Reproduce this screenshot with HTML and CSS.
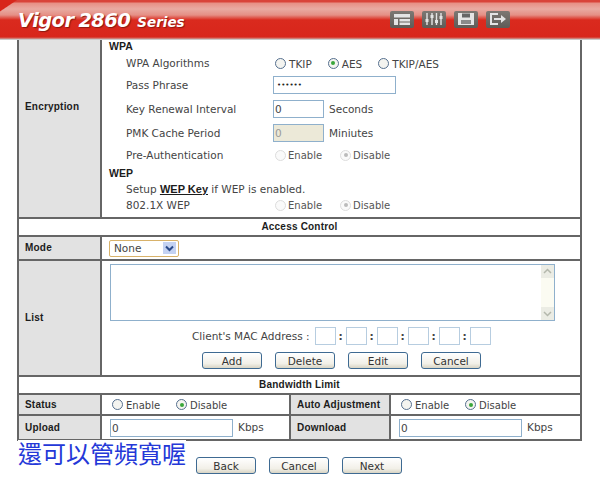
FILE: index.html
```html
<!DOCTYPE html>
<html lang="en">
<head>
<meta charset="utf-8">
<title>Vigor2860 Series</title>
<link rel="stylesheet" href="styles.css">
</head>
<body>
<header class="banner">
  <div class="logo"><span class="logo-name">Vigor</span><span class="logo-num">2860</span><span class="logo-series">Series</span></div>
  <nav class="tools">
    <span class="tool"><svg width="22" height="16" viewBox="0 0 22 16"><path d="M3 3h16v3.500H3zM3 8h4v6H3zM8.500 8H19v2.500H8.500zM8.500 11.500H19V14H8.500z" fill="#e4e4e4"/></svg></span>
    <span class="tool"><svg width="22" height="16" viewBox="0 0 22 16"><path d="M4 2v12M9 2v12M13.500 2v12M18 2v12" stroke="#e4e4e4" stroke-width="1.400"/><path d="M2.500 8h3v3h-3zM7.500 4h3v3h-3zM12 9h3v3h-3zM16.500 5h3v3h-3z" fill="#e4e4e4"/></svg></span>
    <span class="tool"><svg width="22" height="16" viewBox="0 0 22 16"><path d="M3 2h16v12H3z" fill="#e4e4e4"/><path d="M7 2.500h8v4H7z" fill="#666"/><path d="M6 9h10v4H6z" fill="#8a8a8a"/></svg></span>
    <span class="tool"><svg width="22" height="16" viewBox="0 0 22 16"><path d="M11 3H4v10h7" fill="none" stroke="#e4e4e4" stroke-width="2"/><path d="M7 7h7V4l5 4-5 4V9H7z" fill="#e4e4e4"/></svg></span>
  </nav>
</header>

<table class="cfg">
  <colgroup><col class="c1"><col class="c2"><col class="c3"><col class="c4"></colgroup>
  <tr class="r-enc">
    <th class="th-enc">Encryption</th>
    <td colspan="3" class="enc">
      <div class="sub">WPA</div>
      <div class="line h22"><span class="k">WPA Algorithms</span><label class="radio r1"><i class="rb"></i>TKIP</label><label class="radio g1"><i class="rb on"></i>AES</label><label class="radio g1"><i class="rb"></i>TKIP/AES</label></div>
      <div class="line h22"><span class="k">Pass Phrase</span><span class="inp w123 dots">••••••</span></div>
      <div class="line h26"><span class="k">Key Renewal Interval</span><span class="inp w51">0</span><span class="unit">Seconds</span></div>
      <div class="line h22"><span class="k">PMK Cache Period</span><span class="inp w51 off">0</span><span class="unit">Miniutes</span></div>
      <div class="line h22"><span class="k">Pre-Authentication</span><label class="radio dis r1"><i class="rb off"></i>Enable</label><label class="radio dis g2"><i class="rb off on"></i>Disable</label></div>
      <div class="sub s2">WEP</div>
      <div class="line h15"><span>Setup <a class="link" href="#">WEP Key</a> if WEP is enabled.</span></div>
      <div class="line h18"><span class="k">802.1X WEP</span><label class="radio dis r1"><i class="rb off"></i>Enable</label><label class="radio dis g2"><i class="rb off on"></i>Disable</label></div>
    </td>
  </tr>
  <tr class="r-head"><td colspan="4" class="head">Access Control</td></tr>
  <tr class="r-mode">
    <th>Mode</th>
    <td colspan="3"><span class="select">None<i class="arrow"><svg width="9" height="7" viewBox="0 0 9 7"><path d="M1 1.500l3.500 3.500L8 1.500" fill="none" stroke="#2a4a8a" stroke-width="2"/></svg></i></span></td>
  </tr>
  <tr class="r-list">
    <th>List</th>
    <td colspan="3" class="list">
      <div class="area"><div class="scroll"><i class="sb"><svg width="13" height="13" viewBox="0 0 13 13"><path d="M3 8l3.500-3.500L10 8" fill="none" stroke="#b4b8ac" stroke-width="1.500"/></svg></i><i class="sb"><svg width="13" height="13" viewBox="0 0 13 13"><path d="M3 5l3.500 3.500L10 5" fill="none" stroke="#b4b8ac" stroke-width="1.500"/></svg></i></div></div>
      <div class="mac">Client's MAC Address :<span class="oct"></span><b>:</b><span class="oct"></span><b>:</b><span class="oct"></span><b>:</b><span class="oct"></span><b>:</b><span class="oct"></span><b>:</b><span class="oct"></span></div>
      <div class="btns"><button class="btn">Add</button><button class="btn">Delete</button><button class="btn">Edit</button><button class="btn">Cancel</button></div>
    </td>
  </tr>
  <tr class="r-head"><td colspan="4" class="head">Bandwidth Limit</td></tr>
  <tr class="r-status">
    <th>Status</th>
    <td><div class="pair"><label class="radio"><i class="rb"></i>Enable</label><label class="radio g3"><i class="rb on"></i>Disable</label></div></td>
    <th class="nw">Auto Adjustment</th>
    <td><div class="pair"><label class="radio"><i class="rb"></i>Enable</label><label class="radio g3"><i class="rb on"></i>Disable</label></div></td>
  </tr>
  <tr class="r-rate">
    <th>Upload</th>
    <td><span class="inp w123">0</span><span class="unit">Kbps</span></td>
    <th>Download</th>
    <td><span class="inp w123">0</span><span class="unit">Kbps</span></td>
  </tr>
</table>

<div class="footer"><button class="btn">Back</button><button class="btn">Cancel</button><button class="btn">Next</button></div>
<div class="note">還可以管頻寬喔</div>
</body>
</html>
```
FILE: styles.css
```css
html, body { margin: 0; padding: 0; }
body { position: relative; width: 600px; height: 480px; overflow: hidden; background: #fff; color: #444; font: 10.500px/14px "DejaVu Sans", Verdana, sans-serif; }
.banner { height: 40px; box-sizing: border-box; display: flex; align-items: center; justify-content: space-between; padding: 0 90px 0 18px; border-bottom: 1px solid #c9c9c9; background: linear-gradient(146deg, #d8261b 0 9px, transparent 10px) no-repeat, linear-gradient(#d9433a 0, #d9433a 2px, #e78f85 3px, #e9aaa2 9px, #e58f85 15px, #da2a1e 20px, #d8261b 37px, #cc9a94 39px); }
.logo { margin-top: 4px; color: #fff; font-family: "DejaVu Sans", sans-serif; font-weight: bold; font-style: italic; white-space: nowrap; text-shadow: 1px 1px 1px #8a1a12; }
.logo-name, .logo-num { font-size: 19.500px; letter-spacing: -.6px; }
.logo-num { margin-left: 5px; }
.logo-series { font-size: 13.500px; margin-left: 7px; }
.tools { display: flex; gap: 8px; margin-top: -1px; }
.tool { width: 24px; height: 17px; display: flex; align-items: center; justify-content: center; border-radius: 2px; background: linear-gradient(#7d7873, #5f5b57); }
.cfg { border-collapse: collapse; table-layout: fixed; width: 565px; margin-left: 17px; }
.c1 { width: 83px; } .c2 { width: 189px; } .c3 { width: 100px; }
.cfg th, .cfg td { border: 2px solid #666; padding: 0; }
.cfg tr:first-child th, .cfg tr:first-child td { border-top: 0; }
.cfg th { background: #e2e2e2; color: #1c1c1c; text-align: left; padding-left: 6px; font: bold 10px/12px "Liberation Sans", sans-serif; letter-spacing: .2px; }
.cfg .th-enc { padding-bottom: 43px; }
.nw { white-space: nowrap; }
.r-enc { height: 178px; }
.enc { vertical-align: top; padding: 0 0 0 7px !important; }
.sub { font: bold 10.500px/12px "Liberation Sans", sans-serif; color: #1c1c1c; }
.s2 { line-height: 15px; }
.line { display: flex; align-items: center; padding-left: 17px; white-space: nowrap; }
.h22 { height: 22px; } .h26 { height: 26px; } .h15 { height: 15px; } .h18 { height: 18px; }
.k { width: 147px; flex: none; }
.r1 { margin-left: 2px; }
.radio { display: inline-flex; align-items: center; gap: 3px; padding-top: 2px; }
.g1 { margin-left: 16px; } .g2 { margin-left: 18px; } .g3 { margin-left: 16px; }
.dis { color: #555; font-size: 10px; gap: 2px; }
.pair .radio { font-size: 10px; }
.rb { width: 9px; height: 9px; border: 1px solid #56708f; border-radius: 50%; background: #f4f4f0; position: relative; display: inline-block; margin-top: -2px; }
.rb.on::after { content: ""; position: absolute; left: 2.500px; top: 2.500px; width: 4px; height: 4px; border-radius: 50%; background: #3aa63a; }
.rb.off { border-color: #ddd; background: #fafafa; }
.rb.off.on::after { background: #bbb; }
.inp { display: inline-block; box-sizing: border-box; height: 18px; border: 1px solid #8fb0cc; padding: 1px 0 0 1px; background: #fff; vertical-align: middle; font-size: 10.500px; line-height: 14px; }
.w123 { width: 123px; } .w51 { width: 51px; }
.dots { font-size: 7px; padding-left: 3px; color: #222; line-height: 15px; }
.off.inp { background: #ece9d8; color: #999; }
.unit { margin-left: 5px; }
.link { color: #1c1c1c; font: bold 11px/14px "Liberation Sans", sans-serif; }
.head { text-align: center; font: bold 10px/12px "Liberation Sans", sans-serif; letter-spacing: .2px; color: #1c1c1c; background: #fff; }
.r-head { height: 18px; }
.r-mode { height: 24px; }
.r-mode td { padding-left: 7px; }
.select { display: inline-flex; align-items: center; justify-content: space-between; box-sizing: border-box; width: 70px; height: 17px; border: 1px solid #d8b26a; border-radius: 2px; padding-left: 4px; padding-right: 2px; vertical-align: middle; }
.arrow { width: 13px; height: 12px; display: flex; align-items: center; justify-content: center; background: #c4d2f2; }
.r-list { height: 116px; }
.list { padding: 3px 0 0 !important; vertical-align: top; }
.area { box-sizing: border-box; width: 445px; height: 57px; margin-left: 8px; border: 1px solid #8fb0cc; display: flex; justify-content: flex-end; }
.scroll { width: 13px; display: flex; flex-direction: column; justify-content: space-between; background: #fbfbf2; }
.sb { height: 13px; display: block; background: #ebece4; }
.sb svg { display: block; }
.mac { display: flex; align-items: center; margin: 4px 0 0 90px; height: 21px; white-space: nowrap; }
.oct { width: 21px; height: 18px; box-sizing: border-box; border: 1px solid #b7cde0; }
.mac .oct:first-of-type { margin-left: 5px; }
.mac b { width: 10px; text-align: center; }
.btns { display: flex; gap: 13px; margin: 6px 0 0 100px; }
.btn { box-sizing: border-box; width: 60px; height: 17px; padding: 0; border: 1px solid #3e6a92; border-radius: 3px; background: linear-gradient(#fff, #f2f0e8 70%, #d8d4c4); color: #333; font: 10.500px/14px "DejaVu Sans", sans-serif; }
.r-status { height: 21px; }
.r-rate { height: 25px; }
.pair { display: flex; padding-left: 10px; }
.r-rate td { padding-left: 8px; white-space: nowrap; }
.footer { display: flex; gap: 13px; padding-left: 196px; margin-top: 16px; }
.note { position: absolute; left: 18px; top: 440px; width: 168px; height: 25px; background: #fff; color: #2438d8; font: 24px/25px "Noto Sans CJK TC", sans-serif; white-space: nowrap; }
```
